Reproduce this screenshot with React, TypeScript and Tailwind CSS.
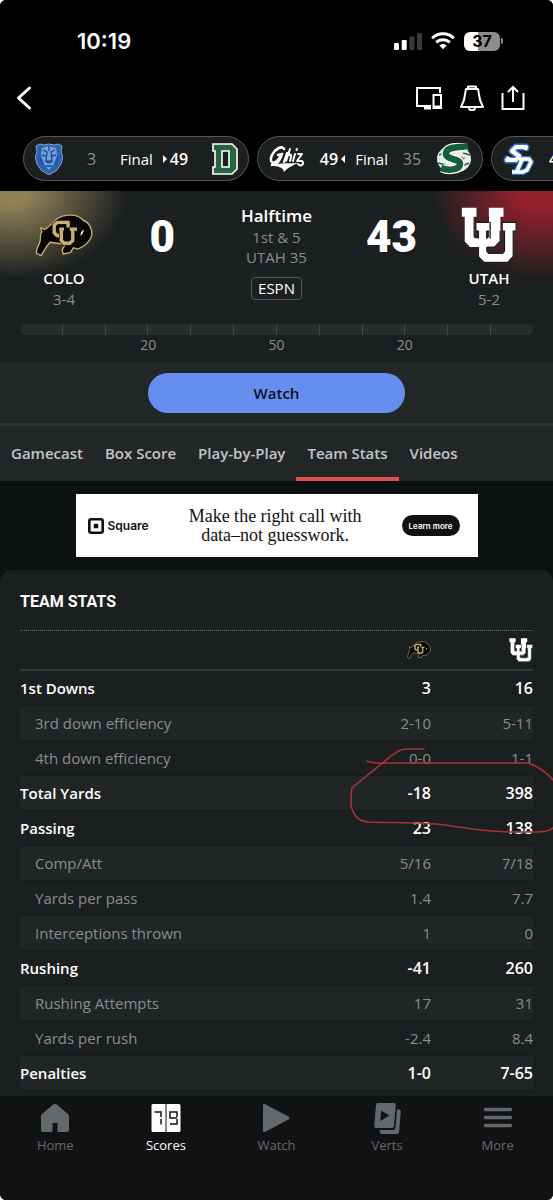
import { useState } from 'react';
import type { ReactNode } from 'react';

const GOLD = '#c9ae70';

function BuffaloLogo({ className }: { className: string }) {
  return (
    <svg viewBox="108 88 172 128" className={className} aria-label="Colorado">
      <path
        d="M125 129 L137 134 L162 114 C180 88 232 82 252 108 C268 110 281 138 276 155 C268 172 258 182 244 188 C236 196 228 190 222 188 L213 203 L191 207 L189 194 L198 178 L152 172 C144 184 138 188 135 197 L126 212 L112 205 C110 190 122 178 123 168 C126 158 120 150 128 141 Z"
        fill="#050505"
        stroke={GOLD}
        strokeWidth="4"
        strokeLinejoin="round"
      />
      <g fill="none" strokeLinejoin="miter">
        <path d="M206 128 V113 H174 L165 121 V144 L173 152 H184" stroke="#111" strokeWidth="14" />
        <path d="M206 128 V113 H174 L165 121 V144 L173 152 H184" stroke={GOLD} strokeWidth="10" />
        <path d="M186 129 V167 L194 175 H211 L220 167 V133 M180 133 H194 M211 133 H233" stroke="#111" strokeWidth="14" />
        <path d="M186 129 V167 L194 175 H211 L220 167 V133 M180 133 H194 M211 133 H233" stroke={GOLD} strokeWidth="10" />
      </g>
      <path d="M243 153 C243 142 249 136 254 135 C250 142 251 148 243 153 Z" fill="#fff" />
    </svg>
  );
}

function UtahLogo({ className }: { className: string }) {
  return (
    <svg viewBox="551 67 171 172" className={className} aria-label="Utah">
      <path
        d="M553 69 H598 V97 H589 V158 L594 164 H632 L637 158 V97 H636 V69 H681 V97 H671 V172 L654 190 H578 L562 173 V97 H553 Z"
        fill="#fff"
      />
      <path
        d="M596 114 H640 V141 H630 V203 L636 209 H678 L684 203 V141 H677 V114 H720 V141 H711 V219 L694 237 H621 L604 220 V141 H596 Z"
        fill="#fff"
        stroke="#1c1f20"
        strokeWidth="4"
      />
      <path d="M637 97 H671 V158 H637 Z M594 164 H666 L671 158 V172 L654 190 H594 Z" fill="#fff" />
      <path d="M630 141 V164 M640 112 V164 M630 190 H654 L671 172 V140" fill="none" stroke="#1c1f20" strokeWidth="4" />
    </svg>
  );
}

function LionLogo() {
  return (
    <svg viewBox="0 0 28 32" className="h-8 w-7" aria-label="Columbia">
      <path
        d="M5 1 L9 2 L14 1 L19 2 L23 1 L27 3 L26 9 L28 14 L26 21 L22 27 L14 32 L6 27 L2 21 L0 14 L2 9 L1 3 Z"
        fill="#2c62ad"
        stroke="#9cc0ea"
        strokeWidth="0.8"
      />
      <path d="M7 5 L14 3 L21 5 L22 12 L19 22 L14 27 L9 22 L6 12 Z" fill="#6ea1de" />
      <path
        d="M8 7 L12 9 L11 17 M20 7 L16 9 L17 17 M7 12 L11 13 M21 12 L17 13 M10 18 H18 L14 20 Z M10 23 H18 M5 15 L9 22 M23 15 L19 22 M14 3 V8"
        fill="none"
        stroke="#1d4a8d"
        strokeWidth="1.3"
      />
    </svg>
  );
}

function DartmouthLogo() {
  return (
    <svg viewBox="0 0 26 32" className="h-8 w-[26px]" aria-label="Dartmouth">
      <path
        d="M1 1 H20 L25 6 V26 L20 31 H1 V24 H3 V8 H1 Z M10 8 V24 H17 V8 Z"
        fill="#27633b"
        fillRule="evenodd"
        stroke="#fff"
        strokeWidth="1.6"
      />
    </svg>
  );
}

function GrizLogo() {
  return (
    <svg viewBox="0 0 36 28" className="h-7 w-9" aria-label="Montana">
      <g fill="none" stroke="#fff" strokeLinecap="round" strokeLinejoin="round">
        <path d="M15 4 C13 0 6 4 3 10 C0 17 4 20 8 16 C10 14 12 11 13 9 L9 10 M13 9 C11 16 8 20 3 20" strokeWidth="2.6" />
        <path d="M15 17 L18 8 M17 12 C19 8 21 9 21 10" strokeWidth="2.2" />
        <path d="M21 4 L17 16 M21 10 C23 9 22 12 21 16" strokeWidth="2" />
        <path d="M24 16 L26 9 M27.500 5 L28 4 M29 9 H33 L28 16 H33 C36 18 32 23 29 19" strokeWidth="2" />
      </g>
      <path d="M2 21 C12 17 22 19 29 18 C25 20 19 22 15 27 C14 22 9 21 2 21 Z" fill="#fff" />
    </svg>
  );
}

function SacStateLogo() {
  return (
    <svg viewBox="0 0 36 32" className="h-8 w-9" aria-label="Sacramento State">
      <ellipse cx="18" cy="16" rx="17" ry="14" fill="#e9eee9" />
      <path d="M3 12 L12 9 M33 20 L24 24 M2 20 L10 22 M34 12 L27 10" stroke="#1d6644" strokeWidth="1.5" />
      <path d="M6 15 L11 12 V18 Z M30 15 L25 13 V19 Z" fill="#c4a26a" />
      <path
        d="M31 3 C22 5 11 3 10 10 C9 17 24 15 24 21 C24 27 12 28 6 25"
        fill="none"
        stroke="#fff"
        strokeWidth="9"
      />
      <path
        d="M32 3 C22 5 11 3 10 10 C9 17 24 15 24 21 C24 27 12 28 5 25"
        fill="none"
        stroke="#14603d"
        strokeWidth="6.5"
      />
    </svg>
  );
}

function SanDiegoLogo() {
  return (
    <svg viewBox="0 0 32 32" className="h-8 w-8" aria-label="San Diego">
      <g fill="none" strokeLinejoin="round">
        <path d="M22 7 L23 4 H13 L9 8 L16 13 L13 17 H4 L6 14" stroke="#2f78c8" strokeWidth="7" />
        <path d="M16 16 H26 L28 19 L24 27 L20 29 H9 M19 17 L14 28" stroke="#2f78c8" strokeWidth="6" />
        <path d="M22 7 L23 4 H13 L9 8 L16 13 L13 17 H4 L6 14" stroke="#fff" strokeWidth="4" />
        <path d="M16 16 H26 L28 19 L24 27 L20 29 H9 M19 17 L14 28" stroke="#fff" strokeWidth="3.5" />
      </g>
    </svg>
  );
}

function StatusBar() {
  return (
    <div className="flex h-[72px] items-center justify-between pt-[10px] pr-[50px] pl-[77px]">
      <span className="font-[Inter] text-[22px] leading-6 font-semibold">10:19</span>
      <div className="flex items-center gap-[9px]">
        <svg viewBox="0 0 28 18" className="h-[18px] w-7" aria-label="Signal">
          <rect x="0" y="11" width="5" height="7" rx="1.2" fill="#fff" />
          <rect x="7.7" y="8" width="5" height="10" rx="1.2" fill="#fff" />
          <rect x="15.4" y="4.5" width="5" height="13.5" rx="1.2" fill="#3a3a3a" />
          <rect x="23" y="1" width="5" height="17" rx="1.2" fill="#3a3a3a" />
        </svg>
        <svg viewBox="0 0 24 18" className="h-[18px] w-6" fill="none" stroke="#fff" strokeWidth="3" aria-label="Wi-Fi">
          <path d="M1.2 6.2 C7 0.4 17 0.4 22.8 6.2" />
          <path d="M5.2 10.4 C9 6.8 15 6.8 18.8 10.4" />
          <path d="M8.4 13.4 C10.4 11.4 13.6 11.4 15.6 13.4 L12 17.2 Z" fill="#fff" stroke="none" />
        </svg>
        <div className="flex items-center gap-px">
          <div className="flex h-[19px] w-9 items-center justify-center rounded-md bg-linear-to-r from-white from-38% to-[#8d8d8d] to-38% font-[Inter] text-[16px] leading-4 font-bold text-black">
            37
          </div>
          <div className="h-[6px] w-[2px] rounded-r bg-[#8d8d8d]" />
        </div>
      </div>
    </div>
  );
}

function TopBar() {
  return (
    <div className="flex h-[52px] items-center justify-between pr-[28px] pl-[16px]">
      <button aria-label="Back">
        <svg viewBox="0 0 16 26" className="h-[26px] w-4" fill="none" stroke="#fff" strokeWidth="3" strokeLinecap="round">
          <path d="M13.5 3 L2.5 13 L13.5 23" strokeLinejoin="round" />
        </svg>
      </button>
      <div className="flex items-center gap-[17px]">
        <button aria-label="Cast">
          <svg viewBox="0 0 28 26" className="h-[26px] w-7" fill="none" stroke="#fff" strokeWidth="2">
            <path d="M25 8 V3 H2 V21 H16" />
            <path d="M18.5 10 H26 V23 H18.5 Z" />
            <path d="M9 23 H16 M18.5 22 H26" strokeWidth="3" />
          </svg>
        </button>
        <button aria-label="Alerts">
          <svg viewBox="0 0 24 26" className="h-[26px] w-6" fill="none" stroke="#fff" strokeWidth="2">
            <path d="M8 4 V1.5 H16 V4 M6 4 H18 L20 15 L23 22 H1 L4 15 Z" strokeLinejoin="round" />
            <path d="M9 23 C9 26 15 26 15 23" />
          </svg>
        </button>
        <button aria-label="Share">
          <svg viewBox="0 0 24 26" className="h-[26px] w-6" fill="none" stroke="#fff" strokeWidth="2">
            <path d="M1.5 8 V24 H22.5 V8" />
            <path d="M12 17 V2 M7 7 L12 2 L17 7" />
          </svg>
        </button>
      </div>
    </div>
  );
}

function Chip({ children }: { children: ReactNode }) {
  return (
    <button className="flex h-[45px] w-[226px] shrink-0 items-center justify-between rounded-full border border-[#55585a] bg-[#1c1f20] pr-[10px] pl-[11px] text-[15px] leading-5">
      {children}
    </button>
  );
}

function ScoreStrip() {
  return (
    <div className="flex gap-2 overflow-hidden pt-[12px] pb-[10px] pl-[23px]">
      <Chip>
        <LionLogo />
        <span className="text-[16px] text-[#8a8d8e]">3</span>
        <span className="flex items-center gap-[10px]">
          Final
          <span className="flex items-center gap-[3px] text-[16px] font-semibold">
            <svg viewBox="0 0 4 8" className="h-2 w-1" fill="#fff"><path d="M0 0 L4 4 L0 8 Z" /></svg>
            49
          </span>
        </span>
        <DartmouthLogo />
      </Chip>
      <Chip>
        <GrizLogo />
        <span className="flex items-center gap-[10px]">
          <span className="flex items-center gap-[3px] text-[16px] font-semibold">
            49
            <svg viewBox="0 0 4 8" className="h-2 w-1" fill="#fff"><path d="M4 0 L0 4 L4 8 Z" /></svg>
          </span>
          Final
        </span>
        <span className="text-[16px] text-[#8a8d8e]">35</span>
        <SacStateLogo />
      </Chip>
      <Chip>
        <span className="flex items-center gap-[14px]">
          <SanDiegoLogo />
          <span className="text-[16px] font-semibold">49</span>
        </span>
      </Chip>
    </div>
  );
}

function Team({ logo, name, record }: { logo: ReactNode; name: string; record: string }) {
  return (
    <div className="flex w-[88px] flex-col items-center">
      <div className="flex h-[62px] items-center">{logo}</div>
      <div className="mt-[2px] text-[15px] leading-5 font-semibold">{name}</div>
      <div className="text-[15px] leading-[22px] text-[#8a8d8e]">{record}</div>
    </div>
  );
}

const yardMarks = ['', '', '20', '', '', '50', '', '', '20', '', '', ''];

function GameHeader() {
  return (
    <header className="bg-[#1c1f20] bg-[radial-gradient(ellipse_115px_88px_at_12px_0px,#8f8158_15%,transparent),radial-gradient(ellipse_110px_88px_at_calc(100%-12px)_0px,#93202d_20%,transparent)] px-5 pb-2">
      <div className="grid grid-cols-[1fr_auto_1fr] pt-[13px]">
        <div className="flex justify-between pr-[66px]">
          <Team logo={<BuffaloLogo className="h-[43px] w-[58px]" />} name="COLO" record="3-4" />
          <div className="pt-[9px] font-[Roboto] text-[44px] leading-[48px] font-black">0</div>
        </div>
        <div className="flex flex-col items-center">
          <div className="text-[17px] leading-[23px] font-semibold">Halftime</div>
          <div className="text-[15px] leading-5 text-[#8a8d8e]">1st &amp; 5</div>
          <div className="text-[15px] leading-5 text-[#8a8d8e]">UTAH 35</div>
          <div className="mt-[10px] rounded border border-[#55585a] px-[6px] text-[15px] leading-[21px]">ESPN</div>
        </div>
        <div className="flex justify-between pl-[54px]">
          <div className="pt-[9px] font-[Roboto] text-[44px] leading-[48px] font-black">43</div>
          <Team logo={<UtahLogo className="size-14" />} name="UTAH" record="5-2" />
        </div>
      </div>
      <div className="mt-[14px] flex h-[11px] overflow-hidden rounded-full bg-[#292c2d]">
        {yardMarks.map((_, i) => (
          <div key={i} className="flex-1 border-r border-[#45484a] last:border-r-0" />
        ))}
      </div>
      <div className="flex h-5 text-[14px] leading-5 text-[#8a8d8e]">
        {yardMarks.map((mark, i) => (
          <div key={i} className="flex w-0 flex-1 justify-end">
            <span className="w-0 text-center"><span className="-mx-4 inline-block w-8">{mark}</span></span>
          </div>
        ))}
      </div>
    </header>
  );
}

const tabs = ['Gamecast', 'Box Score', 'Play-by-Play', 'Team Stats', 'Videos'];

function Tabs() {
  const [active, setActive] = useState('Team Stats');
  return (
    <nav className="flex overflow-hidden border-t-[3px] border-[#303335] bg-[#232627]">
      {tabs.map((tab) => (
        <button
          key={tab}
          onClick={() => setActive(tab)}
          className={`h-[55px] shrink-0 border-b-4 px-[11px] pt-[2px] text-[15px] leading-5 font-semibold text-[#c3c5c6] ${
            tab === active ? 'border-[#d9534a]' : 'border-transparent'
          }`}
        >
          {tab}
        </button>
      ))}
    </nav>
  );
}

function AdBanner() {
  return (
    <div className="mx-auto my-[13px] flex h-[63px] w-[402px] items-center justify-between bg-white pr-[18px] pl-[12px] text-[#111]">
      <div className="flex items-center gap-[4px]">
        <svg viewBox="0 0 16 16" className="size-4" aria-hidden="true">
          <rect x="1.3" y="1.3" width="13.4" height="13.4" rx="2" fill="none" stroke="#111" strokeWidth="2.6" />
          <rect x="5.8" y="5.8" width="4.4" height="4.4" fill="#111" />
        </svg>
        <span className="font-[Inter] text-[12px] leading-4 font-semibold">Square</span>
      </div>
      <div className="text-center font-['Liberation_Serif',serif] text-[18px] leading-[19px]">
        Make the right call with
        <br />
        data–not guesswork.
      </div>
      <button className="h-[21px] rounded-full bg-[#111] px-[7px] font-[Inter] text-[8px] leading-4 font-semibold text-white">
        Learn more
      </button>
    </div>
  );
}

type Stat = { label: string; colo: string; utah: string; sub?: boolean };

const stats: Stat[] = [
  { label: '1st Downs', colo: '3', utah: '16' },
  { label: '3rd down efficiency', colo: '2-10', utah: '5-11', sub: true },
  { label: '4th down efficiency', colo: '0-0', utah: '1-1', sub: true },
  { label: 'Total Yards', colo: '-18', utah: '398' },
  { label: 'Passing', colo: '23', utah: '138' },
  { label: 'Comp/Att', colo: '5/16', utah: '7/18', sub: true },
  { label: 'Yards per pass', colo: '1.4', utah: '7.7', sub: true },
  { label: 'Interceptions thrown', colo: '1', utah: '0', sub: true },
  { label: 'Rushing', colo: '-41', utah: '260' },
  { label: 'Rushing Attempts', colo: '17', utah: '31', sub: true },
  { label: 'Yards per rush', colo: '-2.4', utah: '8.4', sub: true },
  { label: 'Penalties', colo: '1-0', utah: '7-65' },
];

function TeamStats() {
  return (
    <section className="relative flex-1 overflow-hidden rounded-t-xl bg-[#1c1f20] px-5 pb-1">
      <h2 className="border-b border-dotted border-[#6a6d6e] pt-[20px] pb-[16px] font-[Roboto] text-[16px] leading-6 font-bold">
        TEAM STATS
      </h2>
      <table className="w-full border-collapse text-[15px] leading-5">
        <thead>
          <tr className="h-[39px] border-b-2 border-[#36393a]">
            <th aria-label="Stat" />
            <th className="w-[120px]"><BuffaloLogo className="ml-auto h-[18px] w-6" /></th>
            <th className="w-[102px]"><UtahLogo className="ml-auto size-6" /></th>
          </tr>
        </thead>
        <tbody>
          {stats.map((s) => (
            <tr
              key={s.label}
              className={`h-[35px] border-b border-[#161819] even:bg-[#212526] ${
                s.sub ? 'text-[#8a8d8e]' : 'font-semibold text-white'
              }`}
            >
              <td className={s.sub ? 'pl-[15px]' : ''}>{s.label}</td>
              <td className={`text-right ${s.sub ? '' : 'text-[16px]'}`}>{s.colo}</td>
              <td className={`text-right ${s.sub ? '' : 'text-[16px]'}`}>{s.utah}</td>
            </tr>
          ))}
        </tbody>
      </table>
      {/* hand-drawn circle around total yards */}
      <svg
        viewBox="345 740 208 100"
        className="pointer-events-none absolute top-[170px] right-0 h-[100px] w-[208px]"
        fill="none"
        stroke="#a83232"
        strokeWidth="1.6"
        strokeLinecap="round"
      >
        <path d="M424 749 L407 749 C400 749 397 752 391 756 L352 788 C351 794 351 801 351 806 C354 816 358 821 368 822 C395 823 420 822 445 825 C470 829 495 832 515 832 H538 C545 832 549 831 553 828" />
        <path d="M367 761 C374 764 380 763 389 763 C430 763 490 763 528 763 C540 767 549 775 554 781" />
      </svg>
    </section>
  );
}

const navItems = [
  {
    label: 'Home',
    icon: <path d="M13.2 1.5 Q15 0 16.8 1.5 L28 11 Q29 12 29 13.5 V27 Q29 29 27 29 H19 Q17.5 29 17.5 27.5 V20 H12.5 V27.5 Q12.5 29 11 29 H3 Q1 29 1 27 V13.5 Q1 12 2 11 Z" />,
  },
  {
    label: 'Scores',
    icon: (
      <>
        <path d="M2 1 H14.5 V29 H2 Q0.5 29 0.5 27.5 V2.5 Q0.5 1 2 1 Z M15.5 1 H28 Q29.5 1 29.5 2.5 V27.5 Q29.5 29 28 29 H15.5 Z" />
        <path d="M3.5 9 H10 V14 M10 16 V21.5 M26 15 H19 V9 H26 V14 M26 16 V21 H19" fill="none" stroke="#111214" strokeWidth="1.5" />
      </>
    ),
  },
  {
    label: 'Watch',
    icon: <path d="M2 2.5 Q2 0 4.3 1.3 L27.5 13.5 Q29.5 15 27.5 16.5 L4.3 28.7 Q2 30 2 27.5 Z" />,
  },
  {
    label: 'Verts',
    icon: (
      <>
        <path d="M25 6.5 H27 Q29 6.5 28.8 8.5 L27 29 Q26.8 31 24.8 31 H10 Q8 31 7.8 29 V27 H21 Q23.3 27 23.5 24.7 Z" />
        <path d="M6 0 H22 Q24 0 23.8 2 L22 23 Q21.8 25 19.8 25 H4 Q2 25 2.2 23 L4 2 Q4.2 0 6 0 Z" />
        <path d="M9 7.5 L17.5 12.5 L8.5 18 Z" fill="#111214" />
      </>
    ),
  },
  {
    label: 'More',
    icon: <path d="M2.5 6.5 H27.5 M2.5 14.5 H27.5 M2.5 22.5 H27.5" fill="none" stroke="currentColor" strokeWidth="3.5" strokeLinecap="round" />,
  },
];

function BottomNav() {
  return (
    <nav className="sticky bottom-0 grid h-[104px] grid-cols-5 items-start bg-[#111214] pt-[7px]">
      {navItems.map(({ label, icon }) => (
        <button
          key={label}
          className={`flex flex-col items-center text-[13px] leading-5 font-medium ${
            label === 'Scores' ? 'text-white' : 'text-[#66696b]'
          }`}
        >
          <svg viewBox="0 0 30 32" className="h-8 w-[30px]" fill="currentColor" aria-hidden="true">{icon}</svg>
          {label}
        </button>
      ))}
    </nav>
  );
}

export default function App() {
  return (
    <div className="bg-white">
      <div className="flex min-h-screen flex-col overflow-clip rounded-md bg-[#0e1112] font-['Open_Sans',sans-serif] text-white">
        <div className="bg-black">
          <StatusBar />
          <TopBar />
          <ScoreStrip />
        </div>
        <GameHeader />
        <div className="bg-[#232627] py-[10px]">
          <button className="mx-auto block h-10 w-[257px] rounded-full bg-[#668eee] text-[15px] leading-5 font-semibold text-[#0b1020]">
            Watch
          </button>
        </div>
        <Tabs />
        <AdBanner />
        <TeamStats />
        <BottomNav />
      </div>
    </div>
  );
}
